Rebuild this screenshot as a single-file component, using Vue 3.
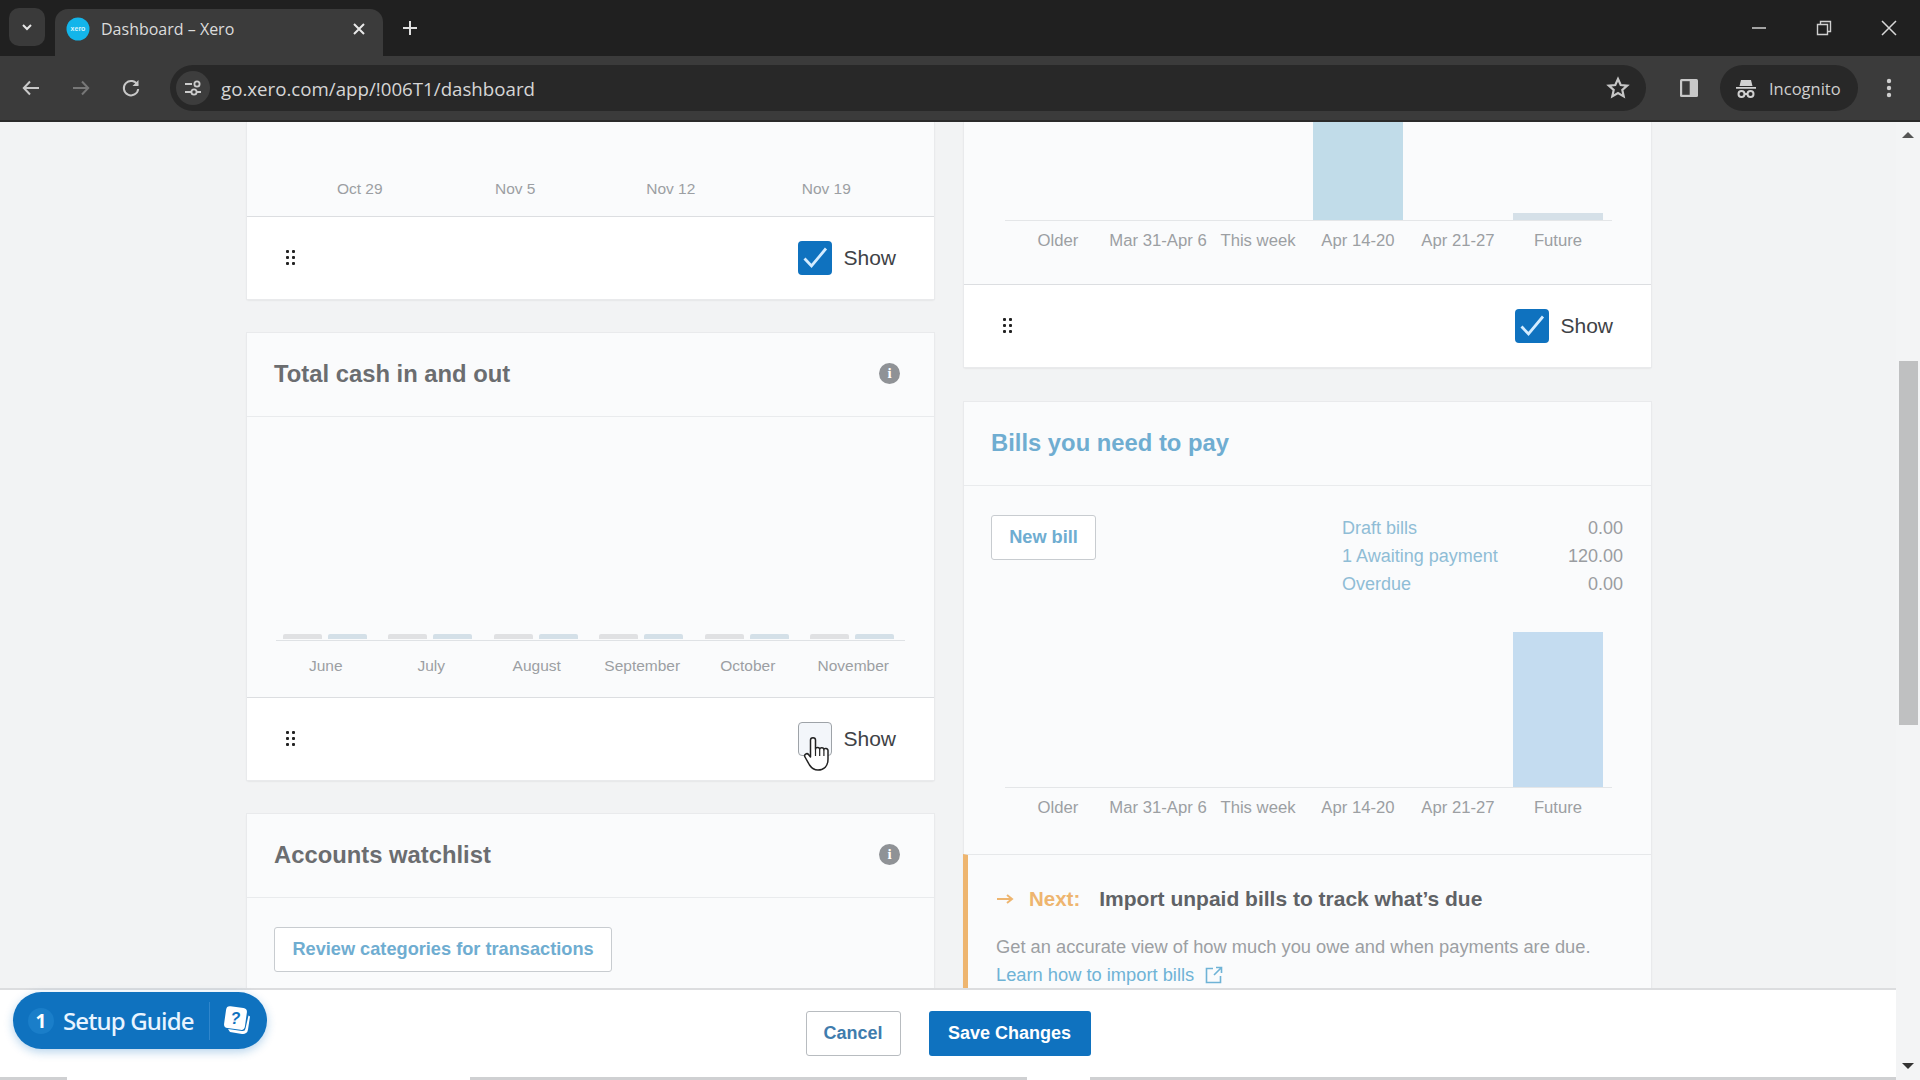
<script setup>
const months = ['June', 'July', 'August', 'September', 'October', 'November']
const weeks = ['Oct 29', 'Nov 5', 'Nov 12', 'Nov 19']
const buckets = ['Older', 'Mar 31-Apr 6', 'This week', 'Apr 14-20', 'Apr 21-27', 'Future']
const bills = [
  { label: 'Draft bills', value: '0.00' },
  { label: '1 Awaiting payment', value: '120.00' },
  { label: 'Overdue', value: '0.00' },
]
</script>

<template>
  <div class="screen">
    <header class="tabstrip">
      <button class="tabsearch" aria-label="Search tabs">
        <svg width="14" height="14" viewBox="0 0 14 14"><path d="M3 5l4 4 4-4" fill="none" stroke="#e6e6e6" stroke-width="2"/></svg>
      </button>
      <div class="tab">
        <svg class="favicon" width="24" height="24" viewBox="0 0 24 24"><circle cx="12" cy="12" r="11.5" fill="#13b5ea"/><text x="12" y="14.4" text-anchor="middle" font-size="7" font-family="Liberation Sans, sans-serif" font-weight="700" fill="#d8f3fc">xero</text></svg>
        <span class="tabtitle">Dashboard – Xero</span>
        <svg class="tabclose" width="14" height="14" viewBox="0 0 14 14"><path d="M2 2l10 10M12 2L2 12" stroke="#e8e8e8" stroke-width="2"/></svg>
      </div>
      <svg class="newtab" width="18" height="18" viewBox="0 0 18 18"><path d="M9 2v14M2 9h14" stroke="#e0e0e0" stroke-width="2"/></svg>
      <div class="winctl">
        <svg width="16" height="16" viewBox="0 0 16 16"><path d="M1 8h14" stroke="#cfcfcf" stroke-width="1.5"/></svg>
        <svg width="16" height="16" viewBox="0 0 16 16"><path d="M1.5 4.5h10v10h-10zM4.5 4.5v-3h10v10h-3" fill="none" stroke="#cfcfcf" stroke-width="1.4"/></svg>
        <svg width="16" height="16" viewBox="0 0 16 16"><path d="M1 1l14 14M15 1L1 15" stroke="#d8d8d8" stroke-width="1.5"/></svg>
      </div>
    </header>

    <nav class="toolbar">
      <svg class="navicon" width="20" height="20" viewBox="0 0 20 20"><path d="M18 10H3M9 3.5L2.8 10 9 16.5" fill="none" stroke="#c8c8c8" stroke-width="2"/></svg>
      <svg class="navicon" width="20" height="20" viewBox="0 0 20 20"><path d="M2 10h15M11 3.5l6.2 6.5-6.2 6.5" fill="none" stroke="#777" stroke-width="2"/></svg>
      <svg class="navicon" width="20" height="20" viewBox="0 0 20 20"><path d="M16.5 7A7.2 7.2 0 1 0 17.2 11" fill="none" stroke="#c8c8c8" stroke-width="2"/><path d="M17.5 2v6h-6z" fill="#c8c8c8"/></svg>
      <div class="omnibox">
        <span class="sitebtn">
          <svg width="20" height="20" viewBox="0 0 20 20"><path d="M2 6h7M13 14h5M2 14h6" stroke="#ccc" stroke-width="2"/><circle cx="14" cy="6" r="2.6" fill="none" stroke="#ccc" stroke-width="1.8"/><circle cx="11" cy="14" r="2.6" fill="none" stroke="#ccc" stroke-width="1.8"/></svg>
        </span>
        <span class="url">go.xero.com/app/!006T1/dashboard</span>
        <svg class="star" width="24" height="24" viewBox="0 0 24 24"><path d="M12 3l2.7 6 6.5.7-4.9 4.3 1.4 6.4L12 17.1l-5.7 3.3 1.4-6.4L2.8 9.7l6.5-.7z" fill="none" stroke="#c6c6c6" stroke-width="2.2"/></svg>
      </div>
      <svg class="panel" width="20" height="20" viewBox="0 0 20 20"><rect x="1" y="1" width="18" height="18" rx="1.5" fill="#c8c8c8"/><rect x="3.2" y="3.2" width="7.5" height="13.6" fill="#3b3b3b"/></svg>
      <div class="incognito">
        <svg width="24" height="24" viewBox="0 0 24 24"><path d="M7 4h10l1.5 6h-13zM2 11h20v1.8H2z" fill="#d0d0d0"/><circle cx="7.5" cy="18" r="3" fill="none" stroke="#d0d0d0" stroke-width="2"/><circle cx="16.5" cy="18" r="3" fill="none" stroke="#d0d0d0" stroke-width="2"/><path d="M10.5 18h3" stroke="#d0d0d0" stroke-width="2"/></svg>
        <span>Incognito</span>
      </div>
      <svg class="kebab" width="6" height="20" viewBox="0 0 6 20"><circle cx="3" cy="3" r="2.2" fill="#cfcfcf"/><circle cx="3" cy="10" r="2.2" fill="#cfcfcf"/><circle cx="3" cy="17" r="2.2" fill="#cfcfcf"/></svg>
    </nav>

    <main class="viewport">
      <div class="columns">
        <section class="column">
          <article class="card">
            <div class="chart chart-weeks">
              <div class="axis-labels weeks">
                <span v-for="w in weeks" :key="w">{{ w }}</span>
              </div>
            </div>
            <div class="showrow">
              <span class="grip"><i v-for="n in 6" :key="n"></i></span>
              <span class="check on"><svg width="34" height="34" viewBox="0 0 34 34"><path d="M6.5 17.5l7 7.5L28 7.5" fill="none" stroke="#d4ecff" stroke-width="2.8"/></svg></span>
              <span class="showlabel">Show</span>
            </div>
          </article>

          <article class="card">
            <div class="cardhead">
              <h2>Total cash in and out</h2>
              <span class="info">i</span>
            </div>
            <div class="chart chart-cash">
              <div class="cashbars">
                <div v-for="m in months" :key="m" class="cashgroup"><i class="grey"></i><i class="blue"></i></div>
              </div>
              <div class="axis-labels months">
                <span v-for="m in months" :key="m">{{ m }}</span>
              </div>
            </div>
            <div class="showrow">
              <span class="grip"><i v-for="n in 6" :key="n"></i></span>
              <span class="check"></span>
              <span class="showlabel">Show</span>
            </div>
          </article>

          <article class="card">
            <div class="cardhead">
              <h2>Accounts watchlist</h2>
              <span class="info">i</span>
            </div>
            <div class="watch">
              <button class="ghost">Review categories for transactions</button>
            </div>
          </article>
        </section>

        <section class="column">
          <article class="card">
            <div class="chart chart-top">
              <div class="bars top">
                <i class="slot"></i><i class="slot"></i><i class="slot"></i>
                <i class="slot"><b class="b-teal"></b></i>
                <i class="slot"></i>
                <i class="slot"><b class="b-grey"></b></i>
              </div>
              <div class="axis-labels buckets">
                <span v-for="b in buckets" :key="b">{{ b }}</span>
              </div>
            </div>
            <div class="showrow">
              <span class="grip"><i v-for="n in 6" :key="n"></i></span>
              <span class="check on"><svg width="34" height="34" viewBox="0 0 34 34"><path d="M6.5 17.5l7 7.5L28 7.5" fill="none" stroke="#d4ecff" stroke-width="2.8"/></svg></span>
              <span class="showlabel">Show</span>
            </div>
          </article>

          <article class="card">
            <div class="cardhead">
              <h2 class="link">Bills you need to pay</h2>
            </div>
            <div class="chart chart-bills">
              <div class="billtop">
                <button class="ghost newbill">New bill</button>
                <dl class="billsum">
                  <div v-for="b in bills" :key="b.label">
                    <dt>{{ b.label }}</dt>
                    <dd>{{ b.value }}</dd>
                  </div>
                </dl>
              </div>
              <div class="bars bottom">
                <i class="slot"></i><i class="slot"></i><i class="slot"></i><i class="slot"></i><i class="slot"></i>
                <i class="slot"><b class="b-blue"></b></i>
              </div>
              <div class="axis-labels buckets">
                <span v-for="b in buckets" :key="b">{{ b }}</span>
              </div>
            </div>
            <div class="next">
              <div class="nexthead">
                <svg width="18" height="12" viewBox="0 0 18 12"><path d="M1 6h14M11 2l5 4-5 4" fill="none" stroke="#eeb56f" stroke-width="2"/></svg>
                <span class="nextword">Next:</span>
                <strong>Import unpaid bills to track what’s due</strong>
              </div>
              <p>Get an accurate view of how much you owe and when payments are due.</p>
              <a>Learn how to import bills
                <svg width="18" height="18" viewBox="0 0 18 18"><path d="M8 2.5H1.5v14h14V10M11 1.5h5.5V7M16.5 1.5L9 9" fill="none" stroke="#6fb3d6" stroke-width="1.6"/></svg>
              </a>
            </div>
          </article>
        </section>
      </div>

      <aside class="scrollbar">
        <svg width="14" height="8" viewBox="0 0 14 8"><path d="M7 1l6 6H1z" fill="#555"/></svg>
        <span class="thumb"></span>
        <svg width="14" height="8" viewBox="0 0 14 8"><path d="M7 7L1 1h12z" fill="#333"/></svg>
      </aside>

      <footer class="savebar">
        <button class="cancel">Cancel</button>
        <button class="save">Save Changes</button>
      </footer>
      <div class="bottomstrip"></div>

      <button class="guide">
        <span class="guidenum">1</span>
        <span class="guidetext">Setup Guide</span>
        <span class="guidesep"></span>
        <svg width="30" height="30" viewBox="0 0 30 30">
          <rect x="4" y="1" width="21" height="22" rx="4" transform="rotate(8 14 12)" fill="#fff"/>
          <text x="14.5" y="18" text-anchor="middle" font-size="16" font-weight="700" font-style="italic" font-family="Liberation Sans, sans-serif" fill="#0f72bf">?</text>
          <path d="M27.5 9.5l1.500 1-2 13a5 5 0 0 1-6 4.500L9 26l-2-3 14 2a3 3 0 0 0 3.500-2.500z" fill="#fff"/>
        </svg>
      </button>

      <svg class="cursor" width="26" height="34" viewBox="0 0 26 34"><path d="M6.5 3c0-3 5-3 5 0v9c0-2 4.200-2 4.200 .3 0-2 4.200-2 4.200 .5 0-2 4.100-1.800 4.100 .8V22c0 7-4 11-10 11-4 0-6.500-2-8.500-5L1 20c-1.500-2.500 2-4.500 3.500-2.500l2 2.500z" fill="#fff" stroke="#222" stroke-width="1.5" stroke-linejoin="round"/><path d="M11.5 12v7M15.700 12.500v6.500M19.900 13v6" stroke="#222" stroke-width="1.2"/></svg>
    </main>
  </div>
</template>

<style>
html, body { margin: 0; padding: 0; }
</style>

<style scoped>
.screen {
  width: 1920px;
  height: 1080px;
  display: flex;
  flex-direction: column;
  overflow: hidden;
  background: #f2f3f4;
  font-family: "Liberation Sans", Arial, sans-serif;
}
button { font-family: inherit; cursor: pointer; }
h2, p, dl, dd { margin: 0; }
i, b { display: block; font-style: normal; }

.tabstrip {
  height: 56px;
  flex: none;
  background: #202020;
  display: flex;
  align-items: flex-end;
  padding-left: 9px;
  box-sizing: border-box;
}
.tabsearch {
  width: 36px;
  height: 38px;
  margin-bottom: 10px;
  background: #3a3a3a;
  border: 0;
  border-radius: 10px;
  display: flex;
  align-items: center;
  justify-content: center;
  padding: 0;
}
.tab {
  margin-left: 10px;
  width: 328px;
  height: 47px;
  background: #3b3b3b;
  border-radius: 13px 13px 0 0;
  display: flex;
  align-items: center;
  padding: 0 17px 8px 11px;
  box-sizing: border-box;
}
.favicon { flex: none; }
.tabtitle {
  margin-left: 11px;
  font-size: 16px;
  color: #dcdcdc;
  flex: 1;
  font-family: "Open Sans", sans-serif;
}
.tabclose { flex: none; }
.newtab { margin: 0 0 19px 18px; }
.winctl {
  margin-left: auto;
  display: flex;
  gap: 49px;
  padding: 0 23px 20px 0;
}

.toolbar {
  height: 66px;
  flex: none;
  background: #3b3b3b;
  display: flex;
  align-items: center;
  padding-left: 21px;
  box-sizing: border-box;
  border-bottom: 2px solid #2a2a2a;
}
.navicon { margin-right: 30px; }
.navicon:nth-child(3) { margin-right: 29px; }
.omnibox {
  width: 1476px;
  height: 46px;
  border-radius: 23px;
  background: #282828;
  display: flex;
  align-items: center;
  padding: 0 16px 0 6px;
  box-sizing: border-box;
}
.sitebtn {
  width: 34px;
  height: 34px;
  border-radius: 50%;
  background: #3d3d3d;
  display: flex;
  align-items: center;
  justify-content: center;
}
.url {
  margin-left: 11px;
  font-size: 18.7px;
  color: #d6d6d6;
  font-family: "Open Sans", sans-serif;
  flex: 1;
}
.panel { margin-left: 33px; }
.incognito {
  margin-left: 21px;
  width: 138px;
  height: 46px;
  background: #282828;
  border-radius: 23px;
  display: flex;
  align-items: center;
  padding-left: 14px;
  gap: 11px;
  box-sizing: border-box;
  color: #cfcfcf;
  font-size: 16.5px;
  font-family: "Open Sans", sans-serif;
}
.kebab { margin-left: 28px; }

.viewport {
  position: relative;
  flex: 1;
  min-height: 0;
  display: flex;
  overflow: hidden;
}
.columns {
  flex: 1;
  display: flex;
  align-items: flex-start;
  gap: 30px;
  padding-left: 247px;
}
.column {
  width: 687px;
  flex: none;
  display: flex;
  flex-direction: column;
  gap: 34px;
}
.column:last-child { gap: 35px; }
.card {
  background: #fafbfc;
  box-shadow: 0 0 0 1px #e9eaec, 0 1px 2px rgba(0, 0, 0, .12);
}
.cardhead {
  height: 84px;
  border-bottom: 1px solid #e9ebed;
  display: flex;
  align-items: center;
  justify-content: space-between;
  padding: 0 34px 2px 27px;
  box-sizing: border-box;
}
h2 {
  font-size: 23.8px;
  font-weight: 700;
  color: #6b6d70;
}
h2.link { color: #6fadd1; }
.info {
  width: 21px;
  height: 21px;
  border-radius: 50%;
  background: #8f9296;
  color: #fff;
  font: 700 15px/21px "Liberation Serif", serif;
  text-align: center;
}
.chart { position: relative; }
.chart-weeks { height: 94px; display: flex; flex-direction: column; justify-content: flex-end; padding-bottom: 18px; box-sizing: border-box; }
.axis-labels {
  display: grid;
  font-size: 15.5px;
  color: #9c9fa3;
  text-align: center;
  line-height: 18px;
}
.weeks { grid-template-columns: repeat(4, 155.5px); padding-left: 35px; }
.months { grid-template-columns: repeat(6, 105.5px); padding-left: 26px; margin-top: 16px; }
.buckets { grid-template-columns: repeat(6, 100px); padding-left: 44px; margin-top: 11px; font-size: 16.7px; white-space: nowrap; }

.chart-cash {
  height: 280px;
  display: flex;
  flex-direction: column;
  justify-content: flex-end;
  padding-bottom: 22px;
  box-sizing: border-box;
}
.cashbars {
  margin: 0 29px;
  display: grid;
  grid-template-columns: repeat(6, 105.5px);
  border-bottom: 1px solid #dfe2e5;
  height: 6px;
}
.cashgroup { display: flex; gap: 6px; padding-left: 6.5px; }
.cashgroup i { width: 39px; height: 5px; flex: none; border-radius: 2px 2px 0 0; }
.grey { background: #e0e1e3; }
.blue { background: #d4e0e8; }

.showrow {
  height: 83px;
  background: #fff;
  border-top: 1px solid #dcdee1;
  display: flex;
  align-items: center;
  padding: 0 38px 1px 39px;
  box-sizing: border-box;
}
.grip {
  display: grid;
  grid-template-columns: 3px 3px;
  gap: 3px 3px;
  margin-right: auto;
}
.grip i { width: 3px; height: 3px; background: #222; border-radius: 1px; }
.check {
  width: 34px;
  height: 34px;
  box-sizing: border-box;
  border: 1.5px solid #9ea3a8;
  border-radius: 4px;
  background: #f3f6fa;
}
.check.on {
  background: #0f72bf;
  border: 0;
  display: flex;
  align-items: center;
  justify-content: center;
}
.showlabel { margin-left: 11px; font-size: 21px; color: #3e4246; }

.watch { padding: 29px 27px 60px; }
.ghost {
  background: #fff;
  border: 1.5px solid #c8ccd0;
  border-radius: 3px;
  color: #6fadd1;
  font-size: 18.2px;
  font-weight: 700;
  height: 45px;
  width: 338px;
  padding: 0;
}

.chart-top { height: 162px; }
.bars {
  margin: 0 39px 0 41px;
  padding-left: 3px;
  display: grid;
  grid-template-columns: repeat(6, 100px);
  align-items: end;
  border-bottom: 1px solid #e4e6e8;
}
.bars.top { height: 98px; }
.bars.bottom { height: 155px; margin-top: 2px; }
.slot { height: 100%; display: flex; align-items: flex-end; justify-content: center; }
.b-teal { width: 90px; height: 98px; background: #c1dce9; }
.b-grey { width: 90px; height: 7px; background: #d5e0e8; }
.b-blue { width: 90px; height: 155px; background: #c4dcf0; }

.chart-bills { height: 368px; padding-top: 29px; box-sizing: border-box; }
.billtop { display: flex; justify-content: space-between; padding: 0 28px 0 27px; height: 115px; }
.newbill { width: 105px; }
.billsum { width: 281px; font-size: 18px; color: #8fbdd6; line-height: 28px; margin-top: -1px; }
.billsum div { display: flex; justify-content: space-between; }
.billsum dd { color: #9a9da1; }

.next {
  border-top: 1px solid #e6e8ea;
  border-left: 5px solid #eeb56f;
  margin-left: -1px;
  padding: 31px 0 0 28px;
  height: 220px;
  box-sizing: border-box;
}
.nexthead { display: flex; align-items: center; font-size: 20.5px; height: 26px; }
.nextword { color: #eeb56f; font-weight: 700; margin: 0 19px 0 15px; }
.nexthead strong { color: #5f6266; font-size: 21px; }
.next p { margin-top: 22px; font-size: 18.3px; color: #9c9fa3; line-height: 26px; }
.next a { color: #6fb3d6; font-size: 18.3px; line-height: 26px; display: inline-flex; align-items: center; gap: 11px; margin-top: 2px; }

.scrollbar {
  position: absolute;
  top: 0;
  right: 0;
  bottom: 0;
  z-index: 2;
  width: 24px;
  background: #f3f4f5;
  display: flex;
  flex-direction: column;
  align-items: center;
  padding: 9px 0 10px;
  box-sizing: border-box;
}
.thumb {
  width: 19px;
  height: 364px;
  background: #bfc0c1;
  margin: 222px 0 auto;
}

.savebar {
  position: absolute;
  left: 0;
  right: 24px;
  top: 866px;
  height: 89px;
  background: #fff;
  border-top: 2px solid #dcdddf;
  box-sizing: border-box;
  display: flex;
  align-items: center;
  justify-content: center;
  gap: 28px;
}
.bottomstrip {
  position: absolute;
  left: 0;
  right: 0;
  bottom: 0;
  height: 3px;
  background: linear-gradient(90deg, #cfd0d2 67px, #fff 67px, #fff 470px, #cfd0d2 470px, #cfd0d2 1027px, #fff 1027px, #fff 1090px, #cfd0d2 1090px);
}
.cancel {
  width: 95px;
  height: 45px;
  background: #fff;
  border: 1.5px solid #b8bcc0;
  border-radius: 3px;
  color: #3f7cad;
  font-size: 18px;
  font-weight: 700;
  padding: 0;
}
.save {
  width: 162px;
  height: 45px;
  background: #0f72bf;
  border: 0;
  border-radius: 3px;
  color: #fff;
  font-size: 18px;
  font-weight: 700;
  padding: 0;
}

.guide {
  position: absolute;
  left: 13px;
  top: 870px;
  width: 254px;
  height: 57px;
  border: 0;
  border-radius: 29px;
  background: #0f72bf;
  box-shadow: 0 3px 10px rgba(15, 114, 191, .3);
  display: flex;
  align-items: center;
  padding: 0 0 0 15px;
  box-sizing: border-box;
  color: #e8f4ff;
}
.guidenum {
  width: 26px;
  height: 26px;
  border-radius: 50%;
  background: #1a7ec9;
  color: #fff;
  font: 700 19px/26px "Noto Sans", sans-serif;
  text-align: center;
}
.guidetext { margin-left: 9px; font: 500 24px/1 "Noto Sans", sans-serif; letter-spacing: -.85px; white-space: nowrap; }
.guidesep { width: 1px; height: 38px; background: #2f86cc; margin: 0 11px 0 15px; flex: none; }
.guide svg { flex: none; }

.cursor {
  position: absolute;
  left: 804px;
  top: 615px;
  overflow: visible;
}
</style>
